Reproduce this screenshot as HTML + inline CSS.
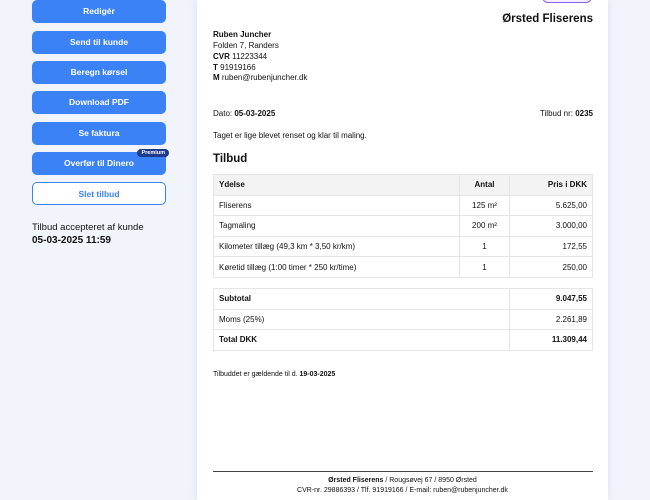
<!DOCTYPE html>
<html><head><style>
*{margin:0;padding:0;box-sizing:border-box}
body{width:650px;height:500px;overflow:hidden;background:#f1f4fb;font-family:"Liberation Sans",sans-serif;color:#111;position:relative}
.btn{position:absolute;left:32px;width:134px;height:23px;background:#3b82f6;border-radius:5px;color:#fff;font-size:8.5px;font-weight:bold;text-align:center;line-height:23px}
.out{background:#fff;border:1.5px solid #3b82f6;color:#3b82f6}
.prem{position:absolute;right:-3px;top:-3px;background:#1e3a8a;color:#fff;font-size:5.5px;line-height:8px;padding:0 4px;border-radius:4px}
.page{position:absolute;left:197px;top:0;width:411px;height:500px;background:#fff;box-shadow:0 0 8px rgba(100,110,180,.15)}
.a{position:absolute;font-size:8px;white-space:nowrap}
table{position:absolute;left:16px;width:380px;border-collapse:collapse;font-size:8px}
td{border:1px solid #e5e5e5;height:20.6px;padding:0 5px}
.r{text-align:right}.c{text-align:center}
</style></head><body>
<div class="btn" style="top:0">Redigér</div>
<div class="btn" style="top:31px">Send til kunde</div>
<div class="btn" style="top:61px">Beregn kørsel</div>
<div class="btn" style="top:91px">Download PDF</div>
<div class="btn" style="top:122px">Se faktura</div>
<div class="btn" style="top:152px">Overfør til Dinero<span class="prem">Premium</span></div>
<div class="btn out" style="top:182px">Slet tilbud</div>
<div class="a" style="left:32px;top:222px;font-size:9.5px">Tilbud accepteret af kunde</div>
<div class="a" style="left:32px;top:235px;font-size:10px;font-weight:bold">05-03-2025 11:59</div>
<div class="page">
<div style="position:absolute;left:345px;top:-10px;width:50px;height:13px;border:1.5px solid #8b5cf6;border-radius:6px;background:#f3efff"></div>
<div class="a" style="right:15px;top:13px;font-size:11.5px;font-weight:bold">Ørsted Fliserens</div>
<div class="a" style="left:16px;top:30px;font-weight:bold">Ruben Juncher</div>
<div class="a" style="left:16px;top:41px">Folden 7, Randers</div>
<div class="a" style="left:16px;top:52px"><b>CVR</b> 11223344</div>
<div class="a" style="left:16px;top:63px"><b>T</b> 91919166</div>
<div class="a" style="left:16px;top:73px"><b>M</b> ruben@rubenjuncher.dk</div>
<div class="a" style="left:16px;top:109px">Dato: <b>05-03-2025</b></div>
<div class="a" style="right:15px;top:109px">Tilbud nr: <b>0235</b></div>
<div class="a" style="left:16px;top:131px">Taget er lige blevet renset og klar til maling.</div>
<div class="a" style="left:16px;top:153px;font-size:11.5px;font-weight:bold">Tilbud</div>
<table style="top:174px">
<tr style="background:#f3f3f3;font-weight:bold"><td>Ydelse</td><td class="c" style="width:50px">Antal</td><td class="r" style="width:83px">Pris i DKK</td></tr>
<tr><td>Fliserens</td><td class="c">125 m²</td><td class="r">5.625,00</td></tr>
<tr><td>Tagmaling</td><td class="c">200 m²</td><td class="r">3.000,00</td></tr>
<tr><td>Kilometer tillæg (49,3 km * 3,50 kr/km)</td><td class="c">1</td><td class="r">172,55</td></tr>
<tr><td>Køretid tillæg (1:00 timer * 250 kr/time)</td><td class="c">1</td><td class="r">250,00</td></tr>
</table>
<table style="top:288px">
<tr><td><b>Subtotal</b></td><td class="r" style="width:83px"><b>9.047,55</b></td></tr>
<tr><td>Moms (25%)</td><td class="r">2.261,89</td></tr>
<tr><td><b>Total DKK</b></td><td class="r"><b>11.309,44</b></td></tr>
</table>
<div class="a" style="left:16px;top:371px;font-size:7px">Tilbuddet er gældende til d. <b>19-03-2025</b></div>
<div style="position:absolute;left:16px;top:471px;width:380px;border-top:1px solid #444"></div>
<div class="a" style="left:0;width:411px;text-align:center;top:477px;font-size:7px"><b>Ørsted Fliserens</b> / Rougsøvej 67 / 8950 Ørsted</div>
<div class="a" style="left:0;width:411px;text-align:center;top:487px;font-size:7px">CVR-nr. 29886393 / Tlf. 91919166 / E-mail: ruben@rubenjuncher.dk</div>
</div>
</body></html>
